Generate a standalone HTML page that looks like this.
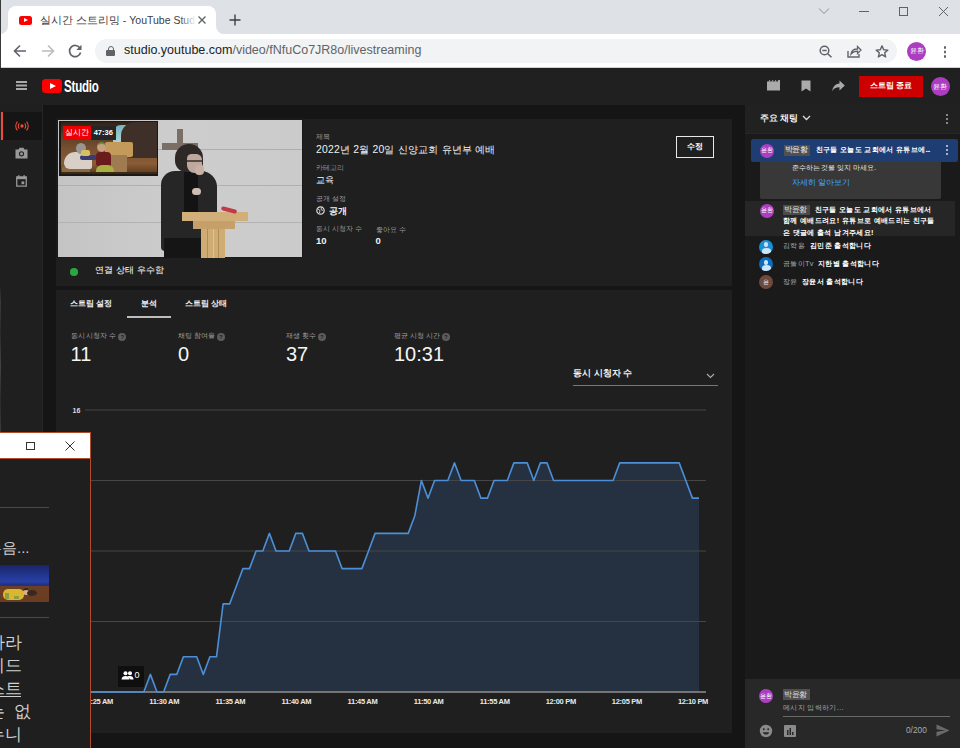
<!DOCTYPE html>
<html><head><meta charset="utf-8">
<style>
*{margin:0;padding:0;box-sizing:border-box}
html,body{width:960px;height:748px;overflow:hidden;background:#151515;font-family:"Liberation Sans",sans-serif}
.a{position:absolute}
.t{position:absolute;white-space:nowrap;line-height:1}
</style></head><body>
<!-- BROWSER CHROME -->
<div class="a" style="left:0;top:0;width:960px;height:34px;background:#dee1e6"></div>
<!-- active tab -->
<div class="a" style="left:8px;top:6px;width:208px;height:29px;background:#fff;border-radius:8px 8px 0 0"></div>
<div class="a" style="left:0px;top:26px;width:8px;height:8px;background:#fff"></div>
<div class="a" style="left:0px;top:18px;width:8px;height:16px;background:#dee1e6;border-radius:0 0 8px 0"></div>
<div class="a" style="left:216px;top:26px;width:8px;height:8px;background:#fff"></div>
<div class="a" style="left:216px;top:18px;width:8px;height:16px;background:#dee1e6;border-radius:0 0 0 8px"></div>
<div class="a" style="left:19px;top:16px;width:13px;height:9px;background:#f00;border-radius:2.5px"></div>
<div class="a" style="left:24px;top:18px;width:0;height:0;border-left:4px solid #fff;border-top:2.5px solid transparent;border-bottom:2.5px solid transparent"></div>
<div class="t" style="left:40px;top:14.5px;font-size:10.5px;color:#3c4043;width:156px;overflow:hidden">실시간 스트리밍 - YouTube Studio</div>
<div class="a" style="left:180px;top:10px;width:16px;height:20px;background:linear-gradient(90deg,rgba(255,255,255,0),#fff)"></div>
<svg class="a" style="left:197px;top:15px" width="10" height="10" viewBox="0 0 10 10"><path d="M1.5 1.5L8.5 8.5M8.5 1.5L1.5 8.5" stroke="#5f6368" stroke-width="1.4"/></svg>
<svg class="a" style="left:229px;top:14px" width="12" height="12" viewBox="0 0 12 12"><path d="M6 0.5V11.5M0.5 6H11.5" stroke="#3c4043" stroke-width="1.4"/></svg>
<!-- window controls -->
<svg class="a" style="left:818px;top:7px" width="12" height="8" viewBox="0 0 12 8"><path d="M1 1.5L6 6.5L11 1.5" stroke="#8a8d91" stroke-width="1" fill="none"/></svg>
<div class="a" style="left:859px;top:11px;width:10px;height:1px;background:#5f6368"></div>
<div class="a" style="left:899px;top:7px;width:9px;height:9px;border:1px solid #5f6368"></div>
<svg class="a" style="left:938px;top:6px" width="11" height="11" viewBox="0 0 11 11"><path d="M1 1L10 10M10 1L1 10" stroke="#5f6368" stroke-width="1"/></svg>
<!-- toolbar -->
<div class="a" style="left:1px;top:34px;width:959px;height:34px;background:#fff"></div>
<svg class="a" style="left:13px;top:44px" width="14" height="14" viewBox="0 0 14 14"><path d="M13 7H2M7 1.5L1.5 7L7 12.5" stroke="#5f6368" stroke-width="1.6" fill="none"/></svg>
<svg class="a" style="left:41px;top:44px" width="14" height="14" viewBox="0 0 14 14"><path d="M1 7H12M7 1.5L12.5 7L7 12.5" stroke="#babcbe" stroke-width="1.6" fill="none"/></svg>
<svg class="a" style="left:68px;top:44px" width="15" height="14" viewBox="0 0 15 14"><path d="M12 4.2A5.6 5.6 0 1 0 12.6 8.5" stroke="#5f6368" stroke-width="1.7" fill="none"/><path d="M13.5 0.8V6H8.3Z" fill="#5f6368"/></svg>
<div class="a" style="left:95px;top:39px;width:802px;height:24px;background:#f1f3f4;border-radius:12px"></div>
<div class="a" style="left:106px;top:50px;width:9px;height:6px;background:#5f6368;border-radius:1px"></div>
<div class="a" style="left:107.5px;top:45.5px;width:6px;height:7px;border:1.5px solid #5f6368;border-radius:3px 3px 0 0"></div>
<div class="t" style="left:124px;top:44px;font-size:12.5px;color:#202124;letter-spacing:0px">studio.youtube.com<span style="color:#5f6368">/video/fNfuCo7JR8o/livestreaming</span></div>
<svg class="a" style="left:819px;top:45px" width="14" height="13" viewBox="0 0 14 13"><circle cx="5.5" cy="5.5" r="4.3" stroke="#5f6368" stroke-width="1.5" fill="none"/><path d="M3.3 5.5H7.7M8.7 8.7L12.5 12.3" stroke="#5f6368" stroke-width="1.5"/></svg>
<svg class="a" style="left:847px;top:45px" width="15" height="13" viewBox="0 0 15 13"><path d="M1 6V12H12V9" stroke="#5f6368" stroke-width="1.4" fill="none"/><path d="M4 9C4.5 5.5 7 4 10.5 4V1.5L14 5L10.5 8.5V6.2C7.8 6.2 5.6 7 4 9Z" stroke="#5f6368" stroke-width="1.3" fill="none"/></svg>
<svg class="a" style="left:875px;top:45px" width="14" height="13" viewBox="0 0 14 13"><path d="M7 0.9L8.7 4.8L12.8 5.1L9.7 7.8L10.6 11.9L7 9.7L3.4 11.9L4.3 7.8L1.2 5.1L5.3 4.8Z" stroke="#5f6368" stroke-width="1.4" fill="none" stroke-linejoin="round"/></svg>
<div class="a" style="left:907px;top:41.5px;width:19px;height:19px;border-radius:50%;background:#ac3dc1"></div>
<div class="t" style="left:907px;top:47px;width:19px;text-align:center;font-size:7px;color:#fff">윤환</div>
<div class="a" style="left:943.5px;top:46px;width:2.5px;height:2.5px;border-radius:50%;background:#5f6368;box-shadow:0 4.5px 0 #5f6368,0 9px 0 #5f6368"></div>
<div class="a" style="left:1px;top:66.5px;width:959px;height:1px;background:#d0d0d0"></div>

<div class="a" style="left:0;top:0;width:1px;height:68px;background:#3a3a3a"></div>
<!-- STUDIO HEADER -->
<div class="a" style="left:0;top:68px;width:960px;height:37px;background:#202020"></div>
<div class="a" style="left:16px;top:81px;width:11px;height:1.5px;background:#aaa;box-shadow:0 3.5px 0 #aaa,0 7px 0 #aaa"></div>
<div class="a" style="left:42px;top:79px;width:20px;height:14px;background:#f00;border-radius:3.5px"></div>
<div class="a" style="left:49.5px;top:83px;width:0;height:0;border-left:6px solid #fff;border-top:3.5px solid transparent;border-bottom:3.5px solid transparent"></div>
<div class="t" style="left:64px;top:78px;font-size:17px;font-weight:bold;color:#fff;transform:scaleX(0.68);transform-origin:0 0;letter-spacing:-0.3px">Studio</div>
<!-- header right icons -->
<svg class="a" style="left:767px;top:80px" width="13" height="11" viewBox="0 0 13 11"><path d="M0 1.5H1.5L2.5 0H3.5L2.5 1.5H4.5L5.5 0H6.5L5.5 1.5H7.5L8.5 0H9.5L8.5 1.5H10.5L11.5 0H13V10.5H0Z" fill="#aaa"/></svg>
<svg class="a" style="left:801px;top:80px" width="10" height="12" viewBox="0 0 10 12"><path d="M0.5 0.5H9.5V11.5L5 8.5L0.5 11.5Z" fill="#aaa"/></svg>
<svg class="a" style="left:832px;top:80px" width="13" height="12" viewBox="0 0 13 12"><path d="M7.5 0.5L12.8 5.5L7.5 10.5V7.3C3.7 7.3 1.5 8.5 0.2 11.2C0.8 7 3 3.8 7.5 3.5Z" fill="#aaa"/></svg>
<div class="a" style="left:859px;top:75.5px;width:64px;height:21.5px;background:#cc0000"></div>
<div class="t" style="left:859px;top:82px;width:64px;text-align:center;font-size:8px;font-weight:bold;color:#fff">스트림 종료</div>
<div class="a" style="left:930.5px;top:76.5px;width:19.5px;height:19.5px;border-radius:50%;background:#ac3dc1"></div>
<div class="t" style="left:930.5px;top:82.5px;width:19.5px;text-align:center;font-size:7px;color:#fff">윤환</div>

<!-- LEFT NAV -->
<div class="a" style="left:0;top:105px;width:43px;height:643px;background:#1f1f1f;border-right:1px solid #262626"></div>
<div class="a" style="left:1px;top:112px;width:41px;height:28px;background:#151515"></div>
<div class="a" style="left:1px;top:112px;width:2px;height:28px;background:#f04a3a"></div>
<svg class="a" style="left:14.5px;top:120.5px" width="14" height="10" viewBox="0 0 17 12"><circle cx="8.5" cy="6" r="2" fill="#f04a3a"/><path d="M5.3 2.8A4.5 4.5 0 0 0 5.3 9.2M11.7 2.8A4.5 4.5 0 0 1 11.7 9.2M3 0.8A7.5 7.5 0 0 0 3 11.2M14 0.8A7.5 7.5 0 0 1 14 11.2" stroke="#f04a3a" stroke-width="1.3" fill="none"/></svg>
<svg class="a" style="left:15px;top:147px" width="13" height="12" viewBox="0 0 13 12"><path d="M0.5 2.5H3.5L4.5 0.8H8.5L9.5 2.5H12.5V11.5H0.5Z" fill="#999"/><circle cx="6.5" cy="6.8" r="2.6" fill="#212121"/><circle cx="6.5" cy="6.8" r="1.5" fill="#999"/></svg>
<svg class="a" style="left:16px;top:175px" width="11" height="12" viewBox="0 0 12 13"><path d="M0.8 2H11.2V12.2H0.8Z" stroke="#999" stroke-width="1.4" fill="none"/><rect x="0.8" y="2" width="10.4" height="2.5" fill="#999"/><rect x="2.5" y="0" width="1.3" height="2.5" fill="#999"/><rect x="8.2" y="0" width="1.3" height="2.5" fill="#999"/><rect x="6" y="7" width="3" height="3" fill="#999"/></svg>


<!-- MAIN -->

<!-- video card -->
<div class="a" style="left:56px;top:119px;width:676px;height:167px;background:#1f1f1f"></div>
<!-- video -->
<div class="a" style="left:56px;top:118px;width:247px;height:140px;background:#1a1a1a;overflow:hidden">
  <div class="a" style="left:1.5px;top:1.5px;width:244px;height:137px;background:linear-gradient(90deg,#c4c4c4 0%,#cdcdcd 50%,#cbcbcb 100%)"></div>
  <div class="a" style="left:1.5px;top:30.5px;width:244px;height:1.2px;background:#adadad"></div>
  <div class="a" style="left:1.5px;top:67px;width:244px;height:1.2px;background:#b0b0b0"></div>
  <div class="a" style="left:1.5px;top:103.5px;width:244px;height:1.2px;background:#b2b2b2"></div>
  <div class="a" style="left:121px;top:10.5px;width:5.7px;height:17px;background:#7a6e66"></div>
  <div class="a" style="left:106px;top:24.5px;width:35.7px;height:7.5px;background:#7a6e66"></div>
  <!-- person -->
  <div class="a" style="left:105px;top:53px;width:56px;height:80px;background:#262626;border-radius:14px 16px 4px 4px"></div>
  <div class="a" style="left:108px;top:120px;width:46px;height:20px;background:#151515"></div>
  <div class="a" style="left:128px;top:52px;width:14px;height:50px;background:#131313"></div>
  <div class="a" style="left:131px;top:51px;width:12px;height:3px;background:#d6d6d6;border-radius:2px"></div>
  <div class="a" style="left:119px;top:26px;width:28px;height:28px;background:#2e2826;border-radius:50% 50% 30% 40%"></div>
  <div class="a" style="left:131px;top:36px;width:15px;height:19px;background:#bca89e;border-radius:5px 6px 8px 8px"></div>
  <div class="a" style="left:131px;top:42px;width:15px;height:1.5px;background:#5a4a44"></div>
  <div class="a" style="left:139px;top:47px;width:9px;height:10px;background:#c8b0a4;border-radius:4px"></div>
  <div class="a" style="left:136px;top:70px;width:9px;height:7px;background:#d0bcb0;border-radius:4px"></div>
  <!-- podium -->
  <div class="a" style="left:126px;top:93.5px;width:65.5px;height:9.5px;background:#d2ae78"></div>
  <div class="a" style="left:137px;top:103px;width:42px;height:7.5px;background:#c6a06a"></div>
  <div class="a" style="left:144.5px;top:110.5px;width:24.3px;height:30px;background:#cfac74"></div>
  <div class="a" style="left:151px;top:110.5px;width:1.2px;height:30px;background:#b08c58"></div>
  <div class="a" style="left:156.5px;top:110.5px;width:1.2px;height:30px;background:#e0c490"></div>
  <div class="a" style="left:162px;top:110.5px;width:1.2px;height:30px;background:#b08c58"></div>
  <div class="a" style="left:165px;top:89.5px;width:16px;height:4px;background:#c03a48;border-radius:2px;transform:rotate(14deg)"></div>
  <!-- inset cartoon -->
  <div class="a" style="left:3px;top:2.5px;width:99px;height:55px;background:#1c1814;overflow:hidden">
   <div class="a" style="left:1.5px;top:1.5px;width:96px;height:52px;background:linear-gradient(180deg,#2e2218 0%,#5a3e26 25%,#7a5232 55%,#8a5c36 80%,#5a3a20 100%);overflow:hidden">
    <div class="a" style="left:52px;top:3px;width:14px;height:17px;background:linear-gradient(160deg,#6ab0c0,#b8d8d8);border-radius:8px 0 0 0"></div>
    <div class="a" style="left:60px;top:0px;width:40px;height:36px;background:#3e3028;border-radius:14px 0 0 10px"></div>
    <div class="a" style="left:44px;top:20px;width:28px;height:15px;background:#c49a5a;border-radius:2px"></div>
    <div class="a" style="left:50px;top:33px;width:16px;height:18px;background:#a07a50"></div>
    <div class="a" style="left:1px;top:44px;width:28px;height:9px;background:#8a6a40;border-radius:3px"></div>
    <div class="a" style="left:3px;top:30px;width:28px;height:17px;background:#d8d0c6;border-radius:12px 8px 2px 6px"></div>
    <div class="a" style="left:15px;top:21px;width:10px;height:11px;background:#9a9590;border-radius:50%"></div>
    <div class="a" style="left:19px;top:33px;width:17px;height:5px;background:#3a3c70;border-radius:3px"></div>
    <div class="a" style="left:20px;top:28px;width:9px;height:6px;background:#d8c060;border-radius:2px"></div>
    <div class="a" style="left:36px;top:20px;width:9px;height:10px;background:#c8a080;border-radius:50%;border-top:2.5px solid #6a8a40"></div>
    <div class="a" style="left:35px;top:30px;width:15px;height:14px;background:#6a1c1c;border-radius:4px 4px 2px 2px"></div>
    <div class="a" style="left:35px;top:43px;width:18px;height:10px;background:#a8b040;border-radius:6px 6px 0 0"></div>
    <div class="a" style="left:0;top:50px;width:96px;height:2px;background:#3a2818"></div>
   </div>
  </div>
  <div class="a" style="left:7px;top:8px;width:28px;height:13.5px;background:#ee0000"></div>
  <div class="t" style="left:7px;top:10.5px;width:28px;text-align:center;font-size:8px;color:#fff">실시간</div>
  <div class="a" style="left:35px;top:8px;width:24.5px;height:13.5px;background:#262626"></div>
  <div class="t" style="left:35px;top:11px;width:24.5px;text-align:center;font-size:7.5px;font-weight:bold;color:#fff">47:36</div>
</div>
<!-- info -->
<div class="t" style="left:316px;top:134px;font-size:6.8px;color:#9a9a9a">제목</div>
<div class="t" style="left:316px;top:144.5px;font-size:10.4px;letter-spacing:0.2px;color:#f1f1f1">2022년 2월 20일 신양교회 유년부 예배</div>
<div class="t" style="left:316px;top:165px;font-size:6.8px;color:#9a9a9a">카테고리</div>
<div class="t" style="left:316px;top:176px;font-size:9px;color:#f8f8f8">교육</div>
<div class="t" style="left:316px;top:195.5px;font-size:6.9px;color:#9a9a9a">공개 설정</div>
<svg class="a" style="left:316px;top:206px" width="9" height="9" viewBox="0 0 9 9"><circle cx="4.5" cy="4.5" r="3.7" stroke="#ddd" stroke-width="1.2" fill="none"/><path d="M2 3L4 4.5L3.5 7M5.5 1.5L5 3.5L7 4.5" stroke="#ddd" stroke-width="0.9" fill="none"/></svg>
<div class="t" style="left:328.7px;top:207px;font-size:9.2px;color:#f1f1f1;font-weight:bold">공개</div>
<div class="t" style="left:316px;top:226px;font-size:6.9px;color:#9a9a9a">동시 시청자 수</div>
<div class="t" style="left:375.6px;top:226px;font-size:7px;color:#9a9a9a">좋아요 수</div>
<div class="t" style="left:316px;top:236px;font-size:9.5px;color:#f1f1f1;font-weight:bold">10</div>
<div class="t" style="left:375.5px;top:236px;font-size:9.5px;color:#f1f1f1;font-weight:bold">0</div>
<div class="a" style="left:676px;top:135.5px;width:38px;height:22.5px;border:1px solid #e8e8e8;border-radius:0"></div>
<div class="t" style="left:676px;top:143px;width:38px;text-align:center;font-size:8px;font-weight:bold;color:#fff">수정</div>
<!-- connection row -->
<div class="a" style="left:70px;top:268px;width:7.5px;height:7.5px;border-radius:50%;background:#2ba640"></div>
<div class="t" style="left:94.5px;top:266px;font-size:9.2px;letter-spacing:0.2px;color:#fff">연결 상태 우수함</div>

<!-- analytics card -->
<div class="a" style="left:56px;top:290px;width:676px;height:443px;background:#1f1f1f"></div>
<div class="t" style="left:70px;top:300px;font-size:8px;font-weight:bold;color:#f1f1f1">스트림 설정</div>
<div class="t" style="left:140.5px;top:300px;font-size:8px;font-weight:bold;color:#f1f1f1">분석</div>
<div class="t" style="left:184.5px;top:300px;font-size:8px;font-weight:bold;color:#f1f1f1">스트림 상태</div>
<div class="a" style="left:127px;top:316px;width:44px;height:2px;background:#bdbdbd"></div>
<div class="t" style="left:70.5px;top:332.5px;font-size:6.9px;color:#a0a0a0">동시 시청자 수 <span style="display:inline-block;width:8px;height:8px;border-radius:50%;background:#5c5c5c;color:#1f1f1f;font-size:6px;text-align:center;line-height:8px;font-weight:bold;vertical-align:-1px">?</span></div>
<div class="t" style="left:70.5px;top:344px;font-size:20px;color:#f5f5f5">11</div>
<div class="t" style="left:178px;top:332.5px;font-size:6.9px;color:#a0a0a0">채팅 참여율 <span style="display:inline-block;width:8px;height:8px;border-radius:50%;background:#5c5c5c;color:#1f1f1f;font-size:6px;text-align:center;line-height:8px;font-weight:bold;vertical-align:-1px">?</span></div>
<div class="t" style="left:178px;top:344px;font-size:20px;color:#f5f5f5">0</div>
<div class="t" style="left:286px;top:332.5px;font-size:6.9px;color:#a0a0a0">재생 횟수 <span style="display:inline-block;width:8px;height:8px;border-radius:50%;background:#5c5c5c;color:#1f1f1f;font-size:6px;text-align:center;line-height:8px;font-weight:bold;vertical-align:-1px">?</span></div>
<div class="t" style="left:286px;top:344px;font-size:20px;color:#f5f5f5">37</div>
<div class="t" style="left:394px;top:332.5px;font-size:6.9px;color:#a0a0a0">평균 시청 시간 <span style="display:inline-block;width:8px;height:8px;border-radius:50%;background:#5c5c5c;color:#1f1f1f;font-size:6px;text-align:center;line-height:8px;font-weight:bold;vertical-align:-1px">?</span></div>
<div class="t" style="left:394px;top:344px;font-size:20px;color:#f5f5f5">10:31</div>

<div class="t" style="left:573px;top:369px;font-size:9.1px;font-weight:bold;color:#f1f1f1">동시 시청자 수</div>
<svg class="a" style="left:706px;top:373px" width="9" height="6" viewBox="0 0 9 6"><path d="M1 1L4.5 4.5L8 1" stroke="#aaa" stroke-width="1.2" fill="none"/></svg>
<div class="a" style="left:573px;top:385px;width:145px;height:1px;background:#777"></div>
<!-- chart -->
<div class="t" style="left:72.5px;top:406.5px;font-size:7px;font-weight:bold;color:#ddd">16</div>
<svg class="a" style="left:0;top:0" width="960" height="748"><path d="M90.9 692.0 L97.5 692.0 L104.1 692.0 L110.7 692.0 L117.3 692.0 L124.0 692.0 L130.6 692.0 L137.2 692.0 L143.8 692.0 L150.4 674.4 L157.0 692.0 L163.6 692.0 L170.2 674.4 L176.8 674.4 L183.4 656.8 L190.1 656.8 L196.7 656.8 L203.3 674.4 L209.9 656.8 L216.5 656.8 L223.1 603.9 L229.7 603.9 L236.3 586.2 L242.9 568.6 L249.5 568.6 L256.1 551.0 L262.8 551.0 L269.4 533.4 L276.0 551.0 L282.6 551.0 L289.2 551.0 L295.8 533.4 L302.4 533.4 L309.0 551.0 L315.6 551.0 L322.2 551.0 L328.9 551.0 L335.5 551.0 L342.1 568.6 L348.7 568.6 L355.3 568.6 L361.9 568.6 L368.5 551.0 L375.1 533.4 L381.7 533.4 L388.4 533.4 L395.0 533.4 L401.6 533.4 L408.2 533.4 L414.8 515.8 L421.4 480.5 L428.0 498.1 L434.6 480.5 L441.2 480.5 L447.8 480.5 L454.5 462.9 L461.1 480.5 L467.7 480.5 L474.3 480.5 L480.9 498.1 L487.5 498.1 L494.1 480.5 L500.7 480.5 L507.3 480.5 L513.9 462.9 L520.6 462.9 L527.2 462.9 L533.8 480.5 L540.4 462.9 L547.0 462.9 L553.6 480.5 L560.2 480.5 L566.8 480.5 L573.4 480.5 L580.0 480.5 L586.6 480.5 L593.3 480.5 L599.9 480.5 L606.5 480.5 L613.1 480.5 L619.7 462.9 L626.3 462.9 L632.9 462.9 L639.5 462.9 L646.1 462.9 L652.8 462.9 L659.4 462.9 L666.0 462.9 L672.6 462.9 L679.2 462.9 L685.8 480.5 L692.4 498.1 L699.0 498.1 L699.0 692 L90.9 692Z" fill="#253040"/>
<path d="M85 410H706M85 480.5H706M85 551H706M85 621.5H706" stroke="#464646" stroke-width="1"/>
<path d="M85 692H706" stroke="#8f8f8f" stroke-width="1.6"/>
<path d="M90.9 692.0 L97.5 692.0 L104.1 692.0 L110.7 692.0 L117.3 692.0 L124.0 692.0 L130.6 692.0 L137.2 692.0 L143.8 692.0 L150.4 674.4 L157.0 692.0 L163.6 692.0 L170.2 674.4 L176.8 674.4 L183.4 656.8 L190.1 656.8 L196.7 656.8 L203.3 674.4 L209.9 656.8 L216.5 656.8 L223.1 603.9 L229.7 603.9 L236.3 586.2 L242.9 568.6 L249.5 568.6 L256.1 551.0 L262.8 551.0 L269.4 533.4 L276.0 551.0 L282.6 551.0 L289.2 551.0 L295.8 533.4 L302.4 533.4 L309.0 551.0 L315.6 551.0 L322.2 551.0 L328.9 551.0 L335.5 551.0 L342.1 568.6 L348.7 568.6 L355.3 568.6 L361.9 568.6 L368.5 551.0 L375.1 533.4 L381.7 533.4 L388.4 533.4 L395.0 533.4 L401.6 533.4 L408.2 533.4 L414.8 515.8 L421.4 480.5 L428.0 498.1 L434.6 480.5 L441.2 480.5 L447.8 480.5 L454.5 462.9 L461.1 480.5 L467.7 480.5 L474.3 480.5 L480.9 498.1 L487.5 498.1 L494.1 480.5 L500.7 480.5 L507.3 480.5 L513.9 462.9 L520.6 462.9 L527.2 462.9 L533.8 480.5 L540.4 462.9 L547.0 462.9 L553.6 480.5 L560.2 480.5 L566.8 480.5 L573.4 480.5 L580.0 480.5 L586.6 480.5 L593.3 480.5 L599.9 480.5 L606.5 480.5 L613.1 480.5 L619.7 462.9 L626.3 462.9 L632.9 462.9 L639.5 462.9 L646.1 462.9 L652.8 462.9 L659.4 462.9 L666.0 462.9 L672.6 462.9 L679.2 462.9 L685.8 480.5 L692.4 498.1 L699.0 498.1" stroke="#4c8fd6" stroke-width="1.6" fill="none" stroke-linejoin="round"/></svg>
<div class="t" style="left:78.1px;top:697.5px;width:40px;text-align:center;font-size:7.5px;font-weight:bold;color:#e8e8e8;letter-spacing:-0.3px">11:25 AM</div>
<div class="t" style="left:144.2px;top:697.5px;width:40px;text-align:center;font-size:7.5px;font-weight:bold;color:#e8e8e8;letter-spacing:-0.3px">11:30 AM</div>
<div class="t" style="left:210.3px;top:697.5px;width:40px;text-align:center;font-size:7.5px;font-weight:bold;color:#e8e8e8;letter-spacing:-0.3px">11:35 AM</div>
<div class="t" style="left:276.4px;top:697.5px;width:40px;text-align:center;font-size:7.5px;font-weight:bold;color:#e8e8e8;letter-spacing:-0.3px">11:40 AM</div>
<div class="t" style="left:342.5px;top:697.5px;width:40px;text-align:center;font-size:7.5px;font-weight:bold;color:#e8e8e8;letter-spacing:-0.3px">11:45 AM</div>
<div class="t" style="left:408.6px;top:697.5px;width:40px;text-align:center;font-size:7.5px;font-weight:bold;color:#e8e8e8;letter-spacing:-0.3px">11:50 AM</div>
<div class="t" style="left:474.7px;top:697.5px;width:40px;text-align:center;font-size:7.5px;font-weight:bold;color:#e8e8e8;letter-spacing:-0.3px">11:55 AM</div>
<div class="t" style="left:540.8px;top:697.5px;width:40px;text-align:center;font-size:7.5px;font-weight:bold;color:#e8e8e8;letter-spacing:-0.3px">12:00 PM</div>
<div class="t" style="left:606.9px;top:697.5px;width:40px;text-align:center;font-size:7.5px;font-weight:bold;color:#e8e8e8;letter-spacing:-0.3px">12:05 PM</div>
<div class="t" style="left:673.0px;top:697.5px;width:40px;text-align:center;font-size:7.5px;font-weight:bold;color:#e8e8e8;letter-spacing:-0.3px">12:10 PM</div>

<div class="a" style="left:118px;top:666px;width:26px;height:21px;background:#0f0f0f"></div>
<svg class="a" style="left:121px;top:671px" width="13" height="9" viewBox="0 0 13 9"><circle cx="4.5" cy="2.2" r="2" fill="#fff"/><circle cx="9" cy="2.2" r="2" fill="#fff"/><path d="M0.5 8.5C0.5 6 2.5 5 4.5 5S8.5 6 8.5 8.5Z" fill="#fff"/><path d="M6.5 5.3C7.5 5 8 5 9 5C11 5 12.5 6 12.5 8.5H9.5" fill="#fff"/></svg>
<div class="t" style="left:134.5px;top:671px;font-size:9px;color:#fff">0</div>


<!-- CHAT -->

<div class="a" style="left:745px;top:105px;width:215px;height:643px;background:#1a1a1a"></div>
<div class="a" style="left:745px;top:105px;width:215px;height:29px;background:#212121;border-bottom:1px solid #262626"></div>
<div class="t" style="left:759.5px;top:113.5px;font-size:8.8px;color:#f1f1f1;font-weight:bold">주요 채팅</div>
<svg class="a" style="left:802px;top:115px" width="9" height="6" viewBox="0 0 9 6"><path d="M1 1L4.5 4.5L8 1" stroke="#ddd" stroke-width="1.3" fill="none"/></svg>
<div class="a" style="left:945.5px;top:113.5px;width:2.2px;height:2.2px;border-radius:50%;background:#aaa;box-shadow:0 4px 0 #aaa,0 8px 0 #aaa"></div>
<!-- pinned -->
<div class="a" style="left:759.5px;top:158px;width:181px;height:41px;background:#383838;border-radius:2px"></div>
<div class="t" style="left:791.5px;top:165px;font-size:6.9px;color:#eee">준수하는 것을 잊지 마세요.</div>
<div class="t" style="left:791.5px;top:179px;font-size:8px;color:#3ea6ff">자세히 알아보기</div>
<div class="a" style="left:750.5px;top:138.5px;width:207px;height:23.5px;background:#1e3d72;border-radius:2px"></div>
<div class="a" style="left:760px;top:143.5px;width:14px;height:14px;border-radius:50%;background:#ab3fc0"></div>
<div class="t" style="left:760px;top:148px;width:14px;text-align:center;font-size:5.5px;color:#fff">윤환</div>
<div class="a" style="left:783.5px;top:144.5px;width:26.5px;height:11px;background:#505050"></div>
<div class="t" style="left:784.5px;top:146px;font-size:7.6px;letter-spacing:-0.3px;color:#eee">박윤황</div>
<div class="t" style="left:815.5px;top:146px;font-size:7.4px;letter-spacing:0.34px;color:#fff;font-weight:bold">친구들 오늘도 교회에서 유튜브에<span style="letter-spacing:-0.6px">...</span></div>
<div class="a" style="left:945.5px;top:145px;width:2.2px;height:2.2px;border-radius:50%;background:#ddd;box-shadow:0 4px 0 #ddd,0 8px 0 #ddd"></div>
<!-- highlighted message -->
<div class="a" style="left:745px;top:201px;width:209.5px;height:35px;background:#262626"></div>
<div class="a" style="left:759.5px;top:203.5px;width:14px;height:14px;border-radius:50%;background:#ab3fc0"></div>
<div class="t" style="left:759.5px;top:208px;width:14px;text-align:center;font-size:5.5px;color:#fff">윤환</div>
<div class="a" style="left:783px;top:204.5px;width:27px;height:10.5px;background:#4a4a4a"></div>
<div class="t" style="left:784px;top:205.5px;font-size:7.6px;letter-spacing:-0.3px;color:#ddd">박윤황</div>
<div class="t" style="left:814.5px;top:205.5px;font-size:7.4px;letter-spacing:0.34px;color:#fff;font-weight:bold">친구들 오늘도 교회에서 유튜브에서</div>
<div class="t" style="left:783px;top:217px;font-size:7.4px;letter-spacing:0.34px;color:#fff;font-weight:bold">함께 예배드려요! 유튜브로 예배드리는 친구들</div>
<div class="t" style="left:783px;top:228.5px;font-size:7.4px;letter-spacing:0.34px;color:#fff;font-weight:bold">은 댓글에 출석 남겨주세요!</div>
<div class="a" style="left:759px;top:239.5px;width:14px;height:14px;border-radius:50%;background:#1a8fd8;overflow:hidden"><div class="a" style="left:4.8px;top:2.8px;width:4.4px;height:4.4px;border-radius:50%;background:#cfe6f8"></div><div class="a" style="left:2.5px;top:8px;width:9px;height:6px;border-radius:50% 50% 0 0;background:#cfe6f8"></div></div>
<div class="t" style="left:783px;top:242.0px;font-size:7.35px;letter-spacing:0.34px;color:#aaa">김학용</div>
<div class="t" style="left:810px;top:242.0px;font-size:7.4px;letter-spacing:0.34px;color:#fff;font-weight:bold">김민준 출석합니다</div>
<div class="a" style="left:759px;top:257.4px;width:14px;height:14px;border-radius:50%;background:#0b6cc0;overflow:hidden"><div class="a" style="left:4.8px;top:2.8px;width:4.4px;height:4.4px;border-radius:50%;background:#cfe6f8"></div><div class="a" style="left:2.5px;top:8px;width:9px;height:6px;border-radius:50% 50% 0 0;background:#cfe6f8"></div></div>
<div class="t" style="left:783px;top:259.9px;font-size:7.35px;letter-spacing:0.34px;color:#aaa">곰돌이Tv</div>
<div class="t" style="left:818px;top:259.9px;font-size:7.4px;letter-spacing:0.34px;color:#fff;font-weight:bold">지한별 출석합니다</div>
<div class="a" style="left:759px;top:275.3px;width:14px;height:14px;border-radius:50%;background:#6d4a40;overflow:hidden"><div class="t" style="left:0;top:4.5px;width:14px;text-align:center;font-size:5.5px;color:#eee">윤</div></div>
<div class="t" style="left:783px;top:277.8px;font-size:7.35px;letter-spacing:0.34px;color:#aaa">장윤</div>
<div class="t" style="left:802px;top:277.8px;font-size:7.4px;letter-spacing:0.34px;color:#fff;font-weight:bold">장윤서 출석합니다</div>

<!-- input -->
<div class="a" style="left:745px;top:679px;width:215px;height:69px;background:#282828"></div>
<div class="a" style="left:759px;top:689px;width:14px;height:14px;border-radius:50%;background:#ab3fc0"></div>
<div class="t" style="left:759px;top:693.5px;width:14px;text-align:center;font-size:5.5px;color:#fff">윤환</div>
<div class="a" style="left:783px;top:689px;width:26.5px;height:11px;background:#505050"></div>
<div class="t" style="left:784px;top:690.5px;font-size:7.6px;letter-spacing:-0.3px;color:#ddd">박윤황</div>
<div class="t" style="left:783px;top:703.5px;font-size:7.35px;letter-spacing:0.34px;color:#aaa">메시지 입력하기...</div>
<div class="a" style="left:783px;top:715.5px;width:167px;height:1px;background:#6a6a6a"></div>
<svg class="a" style="left:759px;top:724px" width="14" height="14" viewBox="0 0 14 14"><circle cx="7" cy="7" r="6.2" fill="#8a8a8a"/><circle cx="4.8" cy="5.3" r="1" fill="#282828"/><circle cx="9.2" cy="5.3" r="1" fill="#282828"/><path d="M3.8 8.2C4.5 10 5.6 10.6 7 10.6S9.5 10 10.2 8.2Z" fill="#282828"/></svg>
<svg class="a" style="left:783.5px;top:724.5px" width="12" height="12" viewBox="0 0 12 12"><rect x="0" y="0" width="12" height="12" rx="1" fill="#8a8a8a"/><rect x="3" y="5" width="1.5" height="5" fill="#282828"/><rect x="5.5" y="3" width="1.5" height="7" fill="#282828"/><rect x="8" y="7" width="1.5" height="3" fill="#282828"/></svg>
<div class="t" style="left:906px;top:726px;font-size:8.3px;color:#aaa">0/200</div>
<svg class="a" style="left:935.5px;top:724px" width="14" height="13" viewBox="0 0 14 13"><path d="M0.5 0.5L13.5 6.5L0.5 12.5V7.8L9.5 6.5L0.5 5.2Z" fill="#6a6a6a"/></svg>


<!-- POPUP WINDOW -->

<div class="a" style="left:0;top:432px;width:91px;height:316px;background:#1f1f1f;border:1px solid #b04e2c;border-left:none;border-bottom:none"></div>
<div class="a" style="left:0;top:433px;width:90px;height:25.5px;background:#fff;border-bottom:1px solid #b04e2c"></div>
<div class="a" style="left:0;top:105px;width:1px;height:327px;background:linear-gradient(180deg,#1f1f1f 0%,#1f1f1f 55%,#3a3a3a 60%,#2a2a2a 70%,#444 80%,#2a2a2a 90%,#3a3a3a 100%)"></div>
<div class="a" style="left:26px;top:441.5px;width:9px;height:8px;border:1px solid #333"></div>
<svg class="a" style="left:65px;top:440.5px" width="10" height="10" viewBox="0 0 10 10"><path d="M0.5 0.5L9.5 9.5M9.5 0.5L0.5 9.5" stroke="#333" stroke-width="1"/></svg>
<div class="a" style="left:0;top:506.5px;width:48.5px;height:1px;background:#4a4a4a"></div>
<div class="t" style="left:-13px;top:540px;font-size:15px;color:#ccc">는음...</div>
<div class="a" style="left:0;top:565px;width:48.5px;height:36.5px;background:linear-gradient(180deg,#1a2468 0%,#2840a8 45%,#1e2c78 55%,#6c3e24 57%,#6a3c22 100%);overflow:hidden">
  <div class="a" style="left:3px;top:24px;width:21px;height:11px;background:#dcb630;border-radius:5px"></div>
  <div class="a" style="left:5px;top:28px;width:4px;height:6px;background:#8aa040"></div>
  <div class="a" style="left:14px;top:31px;width:5px;height:3px;background:#8aa040"></div>
  <div class="a" style="left:23px;top:23px;width:6px;height:7px;background:#d8b090;border-radius:50%;border-top:2px solid #2a2a20"></div>
  <div class="a" style="left:27px;top:24.5px;width:10px;height:6px;background:#3a2820;border-radius:50%"></div>
</div>
<div class="a" style="left:0;top:616.5px;width:48.5px;height:1px;background:#4a4a4a"></div>
<div class="a" style="left:0;top:620px;width:90px;height:128px;overflow:hidden">
<div class="t" style="left:-12px;top:14px;font-size:17px;color:#d0d0d0">하라</div>
<div class="t" style="left:-12px;top:37px;font-size:17px;color:#d0d0d0">이드</div>
<div class="t" style="left:-12px;top:60px;font-size:17px;color:#d0d0d0">스트</div>
<div class="t" style="left:-12px;top:83px;font-size:17px;color:#d0d0d0">는&nbsp;&nbsp;없</div>
<div class="t" style="left:-12px;top:106px;font-size:17px;color:#d0d0d0">누니</div>
<div class="a" style="left:0;top:75.5px;width:21px;height:1px;background:#cfcfcf"></div>
</div>

</body></html>
